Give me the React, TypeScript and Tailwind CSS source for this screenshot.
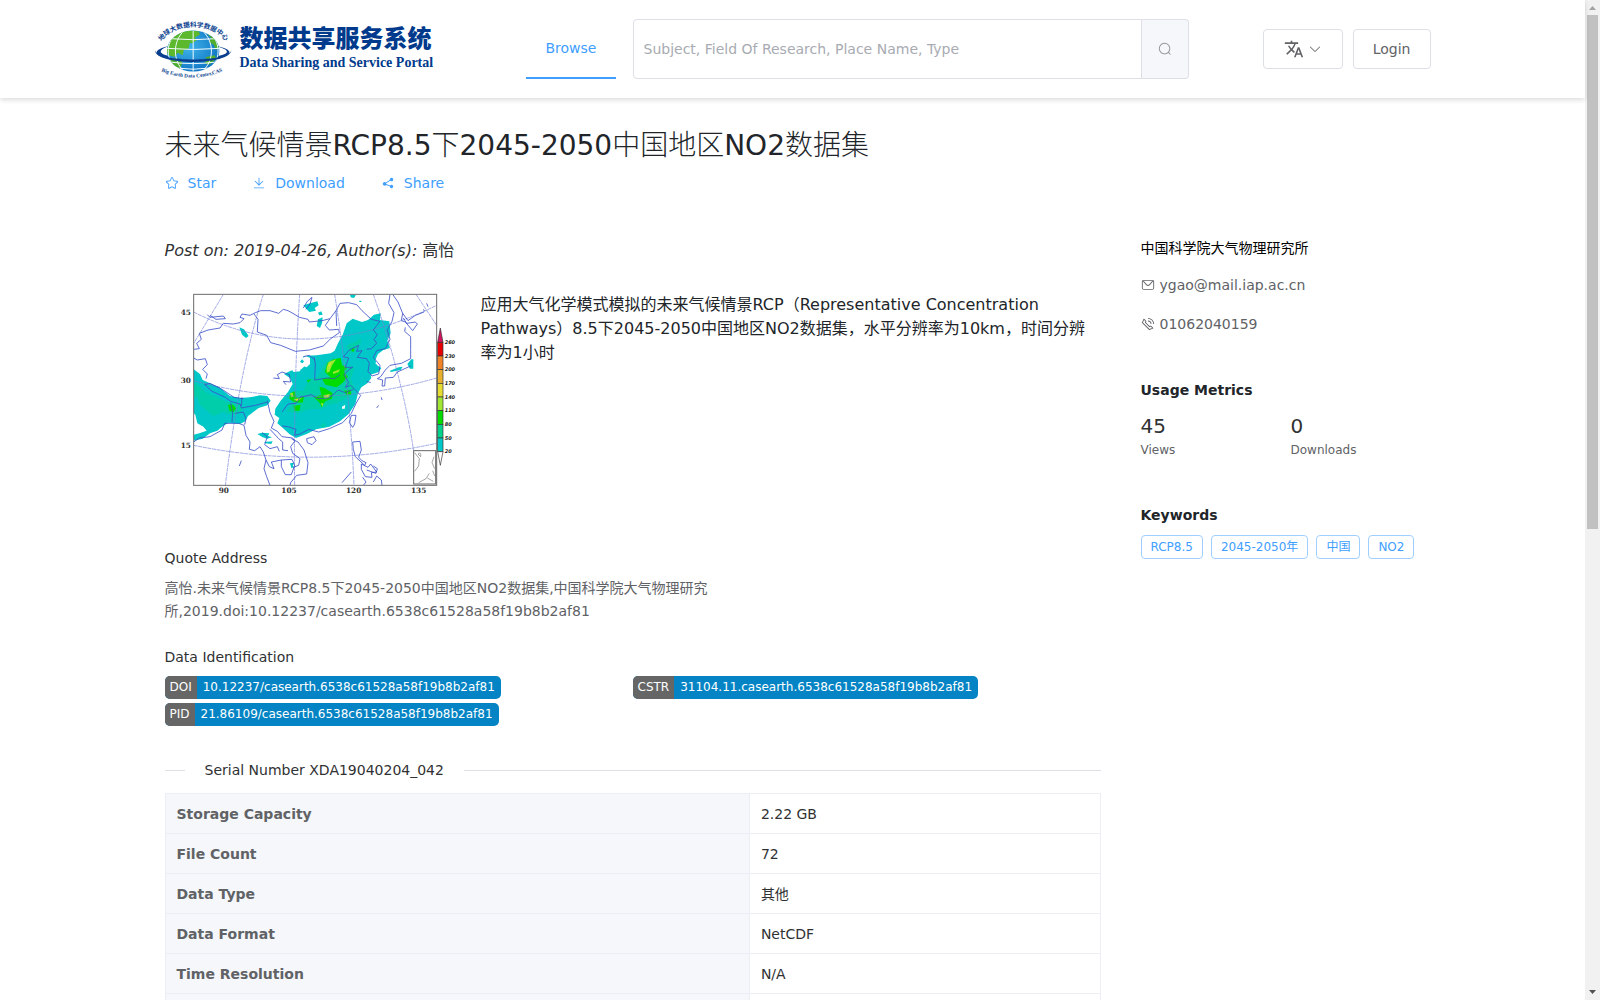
import type { ReactNode } from "react";

const ICONS = {
  search:
    "m795.904 750.72 124.992 124.928a32 32 0 0 1-45.248 45.248L750.656 795.904a416 416 0 1 1 45.248-45.248zM480 832a352 352 0 1 0 0-704 352 352 0 0 0 0 704z",
  arrowDown:
    "M831.872 340.864 512 652.672 192.128 340.864a30.592 30.592 0 0 0-42.752 0 29.12 29.12 0 0 0 0 41.6L489.664 714.24a32 32 0 0 0 44.672 0l340.288-331.712a29.12 29.12 0 0 0 0-41.728 30.592 30.592 0 0 0-42.752 0z",
  star: "m512 747.84 228.16 119.936a6.4 6.4 0 0 0 9.28-6.72l-43.52-254.08 184.512-179.904a6.4 6.4 0 0 0-3.52-10.88l-255.104-37.12L517.76 147.904a6.4 6.4 0 0 0-11.52 0L392.192 379.072l-255.104 37.12a6.4 6.4 0 0 0-3.52 10.88L318.08 606.976l-43.584 254.08a6.4 6.4 0 0 0 9.28 6.72L512 747.84zM313.6 924.48a70.4 70.4 0 0 1-102.144-74.24l37.888-220.928L88.96 472.96A70.4 70.4 0 0 1 128 352.896l221.76-32.256 99.2-200.96a70.4 70.4 0 0 1 126.208 0l99.2 200.96 221.824 32.256a70.4 70.4 0 0 1 39.04 120.064L774.72 629.376l37.888 220.928a70.4 70.4 0 0 1-102.144 74.24L512 820.096l-198.4 104.32z",
  download:
    "M160 832h704a32 32 0 1 1 0 64H160a32 32 0 1 1 0-64zm384-253.696 236.288-236.352 45.248 45.248L508.8 704 192 387.2l45.248-45.248L480 584.704V128h64v450.304z",
  share:
    "m679.872 348.8-301.76 188.608a127.808 127.808 0 0 1 5.12 52.16l279.936 104.96a128 128 0 1 1-22.464 59.904l-279.872-104.96a128 128 0 1 1-16.64-166.272l301.696-188.608a128 128 0 1 1 33.92 54.272z",
  message:
    "M128 224v512a64 64 0 0 0 64 64h640a64 64 0 0 0 64-64V224H128zm0-64h768a64 64 0 0 1 64 64v512a128 128 0 0 1-128 128H192A128 128 0 0 1 64 736V224a64 64 0 0 1 64-64zM904 224 656.512 506.88a192 192 0 0 1-289.024 0L120 224h784zm-698.944 0 210.56 240.704a128 128 0 0 0 192.704 0L818.944 224H205.056z",
  phone:
    "M79.36 432.256 591.744 944.64a32 32 0 0 0 35.2 6.784l253.44-108.544a32 32 0 0 0 9.984-52.032l-153.856-153.92a32 32 0 0 0-36.928-6.016l-69.888 34.944L358.08 394.24l35.008-69.888a32 32 0 0 0-5.952-36.928L233.152 133.568a32 32 0 0 0-52.032 10.048L72.512 397.056a32 32 0 0 0 6.784 35.2zm60.48-29.952 81.536-190.08L325.568 316.48l-24.64 49.216-20.608 41.216 32.576 32.64 271.552 271.552 32.64 32.64 41.216-20.672 49.28-24.576 104.192 104.128-190.08 81.472L139.84 402.304zM512 320v-64a256 256 0 0 1 256 256h-64a192 192 0 0 0-192-192zm0-192V64a448 448 0 0 1 448 448h-64a384 384 0 0 0-384-384z",
};

function Icon({ name }: { name: keyof typeof ICONS }) {
  return (
    <svg viewBox="0 0 1024 1024" className="size-3.5 shrink-0" fill="currentColor" aria-hidden="true">
      <path d={ICONS[name]} />
    </svg>
  );
}

const actions: { label: string; icon: keyof typeof ICONS }[] = [
  { label: "Star", icon: "star" },
  { label: "Download", icon: "download" },
  { label: "Share", icon: "share" },
];

const identifiers = [
  { type: "DOI", value: "10.12237/casearth.6538c61528a58f19b8b2af81" },
  { type: "CSTR", value: "31104.11.casearth.6538c61528a58f19b8b2af81" },
  { type: "PID", value: "21.86109/casearth.6538c61528a58f19b8b2af81" },
];

const details = [
  { name: "Storage Capacity", value: "2.22 GB" },
  { name: "File Count", value: "72" },
  { name: "Data Type", value: "其他" },
  { name: "Data Format", value: "NetCDF" },
  { name: "Time Resolution", value: "N/A" },
  { name: "Spatial Resolution", value: "10km" },
];

const metrics = [
  { value: 45, label: "Views" },
  { value: 0, label: "Downloads" },
];

const keywords = ["RCP8.5", "2045-2050年", "中国", "NO2"];

const legend = [
  { color: "#e60000", label: "260" },
  { color: "#f08228", label: "230" },
  { color: "#e6af2d", label: "200" },
  { color: "#e6dc32", label: "170" },
  { color: "#a0e632", label: "140" },
  { color: "#00dc00", label: "110" },
  { color: "#00d28c", label: "80" },
  { color: "#00c8c8", label: "50" },
];

function Logo() {
  return (
    <a href="#" className="flex items-center gap-2 pl-[2px] text-[#003a8c]">
      <svg viewBox="45 54 232 186" className="h-[62px] w-[77px] shrink-0" aria-hidden="true">
        <defs>
          <radialGradient id="sea" cx="0.4" cy="0.4" r="0.7">
            <stop offset="0" stopColor="#3fb4ea" />
            <stop offset="1" stopColor="#0b6fc0" />
          </radialGradient>
          <clipPath id="globe">
            <ellipse cx="160" cy="153" rx="79" ry="62" />
          </clipPath>
          <path id="arcTop" d="M64 124C104 66 216 66 258 124" />
          <path id="arcBottom" d="M64 214Q160 254 258 210" />
        </defs>
        <path d="M90 137C20 152 40 180 160 180C285 180 295 148 228 138C292 154 262 173 160 173C62 173 36 155 90 137Z" fill="#0a3f8f" />
        <ellipse cx="160" cy="153" rx="79" ry="62" fill="url(#sea)" />
        <g clipPath="url(#globe)">
          <path d="M80 150L92 118L118 97L150 90L178 94L180 104L165 112L172 120L158 130L150 128L146 146L132 150L128 166L114 158L104 170L84 166Z" fill="#5cb82c" />
          <path d="M200 98L226 116L238 142L228 150L222 134L208 126L214 114ZM88 176L110 174L128 188L120 208L100 198ZM196 172L224 166L230 176L210 194L192 190L204 180Z" fill="#4fae2b" />
          <g fill="none" stroke="#f3fbff" strokeWidth="3">
            <path d="M160 90V216M132 92C98 125 98 182 132 214M188 92C224 125 224 182 188 214M108 102C74 130 80 184 110 208M212 102C246 130 240 184 210 208" />
            <path d="M94 116Q160 122 226 116M80 145Q160 152 240 145M88 186Q160 196 232 186M106 204Q160 212 214 204" />
          </g>
        </g>
        <path d="M45 150C50 188 270 188 275 150C276 198 44 198 45 150Z" fill="#0a3f8f" />
        <text className="font-['Noto_Sans_CJK_SC'] text-[20px] font-bold" fill="#0a3f8f">
          <textPath href="#arcTop">地球大数据科学数据中心</textPath>
        </text>
        <text className="font-['Liberation_Serif'] text-[16px] font-bold" fill="#0a3f8f">
          <textPath href="#arcBottom">Big Earth Data Center,CAS</textPath>
        </text>
      </svg>
      <span className="flex flex-col whitespace-nowrap">
        <span className="font-['Noto_Sans_CJK_SC'] text-2xl leading-7 font-black">数据共享服务系统</span>
        <span className="font-['Liberation_Serif'] text-[14px] leading-6 font-bold">Data Sharing and Service Portal</span>
      </span>
    </a>
  );
}

function Header() {
  return (
    <header className="relative bg-white shadow-[0_2px_5px_rgba(0,0,0,0.14)]">
      <div className="mx-auto grid h-[98px] max-w-[1280px] grid-cols-[373fr_107fr_556fr_244fr] items-center">
        <Logo />
        <nav>
          <a
            href="#"
            className="inline-flex h-[60px] items-center border-b-2 border-[#409eff] px-5 text-[#409eff]"
          >
            Browse
          </a>
        </nav>
        <form className="flex h-[60px]">
          <label htmlFor="query" className="sr-only">
            Search
          </label>
          <input
            id="query"
            type="text"
            placeholder="Subject, Field Of Research, Place Name, Type"
            className="min-w-0 flex-1 rounded-l border border-[#dcdfe6] px-2.5 text-base placeholder:text-sm placeholder:text-[#a8abb2]"
          />
          <button
            type="button"
            aria-label="Search"
            className="flex w-[47px] items-center justify-center rounded-r border border-l-0 border-[#dcdfe6] bg-[#f5f7fa] text-[#909399]"
          >
            <Icon name="search" />
          </button>
        </form>
        <div className="flex justify-end gap-2.5 pr-0.5 text-[#606266]">
          <button
            type="button"
            aria-label="Language"
            className="flex h-10 items-center gap-1 rounded border border-[#dcdfe6] px-5"
          >
            <svg viewBox="0 0 24 24" className="size-5" fill="currentColor" aria-hidden="true">
              <path d="M12.87 15.07l-2.54-2.51.03-.03c1.74-1.94 2.98-4.17 3.71-6.53H17V4h-7V2H8v2H1v1.99h11.17C11.5 7.92 10.44 9.75 9 11.35 8.07 10.32 7.3 9.19 6.69 8h-2c.73 1.63 1.73 3.17 2.98 4.56l-5.09 5.02L4 19l5-5 3.11 3.11.76-2.04zM18.5 10h-2L12 22h2l1.12-3h4.75L21 22h2l-4.5-12zm-2.62 7l1.62-4.33L19.12 17h-3.24z" />
            </svg>
            <Icon name="arrowDown" />
          </button>
          <button type="button" className="h-10 rounded border border-[#dcdfe6] px-[19px]">
            Login
          </button>
        </div>
      </div>
    </header>
  );
}

// NO2 concentration over East Asia with its colour scale
function ConcentrationMap() {
  return (
    <svg viewBox="15 12 900 660" className="h-[220px] w-[300px] shrink-0" role="img" aria-label="NO2">
      <defs>
        <clipPath id="frame">
          <rect x="101" y="43" width="729" height="573" />
        </clipPath>
      </defs>
      <rect x="101" y="43" width="729" height="573" fill="#fff" />
      <g clipPath="url(#frame)">
        <g fill="#00c8c8">
          <path d="M101 268L120 282L128 300L150 310L178 322L210 348L240 354L270 352L300 346L322 348L332 362L322 376L296 384L280 396L264 408L256 424L240 432L206 428L186 440L172 452L150 460L128 476L101 482V464L118 460L140 452L130 440L112 430L106 404L101 400Z" />
          <path d="M560 130L578 116L606 126L624 120L642 104L662 100L660 120L688 124L692 160L682 182L690 204L670 210L654 222L646 240L652 256L664 264L656 276L632 284L634 294L622 310L604 322L594 340L586 372L566 402L540 424L508 440L468 448L440 462L408 474L388 462L366 442L352 430L358 414L344 404L346 386L362 362L384 336L398 312L390 294L372 282L392 272L424 268L438 254L420 246L432 228L470 226L512 220L524 212L534 190L548 164Z" />
          <path d="M430 76L450 70L472 64L476 76L464 84L468 92L448 96L440 88ZM474 98L484 94L488 104L478 106ZM474 118L488 112L486 130L480 144L470 138ZM238 142L252 148L266 168L258 174L246 164ZM292 462L306 458L328 460L324 468L336 472L322 476L308 472ZM312 486L338 484L334 492L316 490ZM570 44L588 44L582 54L572 52ZM598 62H604V66H598ZM754 238H760V266H750L742 252ZM690 272L716 262L728 260L722 270L692 276ZM390 550L402 548L398 558L404 562L394 564Z" />
        </g>
        <g fill="#00cdaa">
          <path d="M101 306L118 318L140 338L170 350L200 366L236 372L250 384L240 400L214 406L190 396L160 408L134 386L120 376L112 352L101 348Z" />
          <path d="M446 300L474 290L492 256L506 238L540 234L560 262L584 262L572 296L584 326L566 352L530 370L506 376L484 386L446 388L414 400L392 396L380 394L396 372L388 350L400 334L430 332ZM560 196L584 186L602 174L602 190L584 216L568 218ZM484 432L498 430L496 442L484 442Z" />
        </g>
        <g fill="#00dc00">
          <path d="M494 276L502 250L520 238L542 234L546 256L562 262L552 276L564 290L548 308L530 322L496 314L486 296L512 292ZM390 340L404 334L410 354L432 350L428 368L402 366L388 356ZM478 320L494 324L518 340L516 356L496 364L484 382L480 370L462 352L484 344ZM400 378L422 374L418 392L404 392ZM204 374L220 374L228 386L220 396L208 392ZM552 332L572 330L574 344L560 346ZM576 204L584 206L580 216L574 212ZM440 300L454 298L444 308Z" />
        </g>
        <path d="M500 262L506 246L528 238L516 256L508 276L500 278ZM518 276L540 268L536 276L520 282ZM390 340L398 338L400 350L394 352ZM400 358L426 354L412 364ZM490 346L510 342L508 352L494 356ZM482 370L490 370L488 380Z" fill="#a0e632" />
        <path d="M504 258L512 248L510 260ZM404 358L420 356L410 362ZM496 346L506 344L502 352Z" fill="#e6dc32" />
        <path d="M101 432L114 438L120 446L138 450L101 462ZM424 236L438 228L450 234L450 252L440 262L424 256L432 244ZM398 268L424 260L420 274L400 276ZM546 380L556 374L554 386L546 386ZM664 218L680 210L692 240L660 262L646 250Z" fill="#fff" />

        {/* parallels and meridians */}
        <g fill="none" stroke="#7582d8" strokeWidth="2" strokeDasharray="12 2">
          <path d="M101 96Q440 268 830 76M101 302Q460 400 830 294M101 496Q460 570 830 490" />
          <path d="M190 43Q150 110 101 190M310 43Q240 260 196 616M419 43Q400 330 404 616M524 43Q570 330 582 616M640 43Q730 300 762 520M768 43L830 136" />
        </g>

        {/* coastlines and borders */}
        <g fill="none" stroke="#3c50c8" strokeWidth="2.5" strokeLinejoin="round">
          <path d="M101 234L112 240L136 236L142 254L128 268L142 282L138 296M101 208L118 206L110 190L124 178L118 160L144 150L180 144L190 130L220 132L240 128L252 116L240 112L246 102L270 106L286 98L302 92L330 92L356 100L370 88L384 92L402 102L418 112L444 118L448 126L486 122L510 116L528 92L540 70L566 68L590 74L606 92L634 118L660 124L640 150L652 164L642 178L650 190L634 206L620 208" />
          <path d="M282 102L294 118L292 156L320 166L332 188L362 196L406 214L448 210L490 198L512 176L538 158L536 148L508 150L496 136L510 116M528 92L530 138" />
          <path d="M142 104L150 112L190 108L196 116L168 118L150 106M430 84L442 64L456 52L450 72L438 88" />
          <path d="M134 314L156 334L196 352L212 364L240 372L244 384L286 376L322 366M134 314L150 310L186 328L222 352L250 356M246 352L244 378M212 368L218 398L216 426M226 400L250 396L258 416L254 434" />
          <path d="M101 486L118 474L150 470L186 450L194 430L236 430L252 436L258 466L270 486L268 508L284 512L300 500L310 516L318 540L312 566L320 590L330 616M322 362L330 398L342 424L334 444L352 454L366 470L398 474L404 484M306 458L322 470L314 494L330 506L352 500L358 514M330 448L356 476L368 486L368 510L384 512" />
          <path d="M366 438L384 440L408 448L404 466L420 462L446 448L476 456L508 446L548 428L574 400L588 370L602 346L584 328L572 316L556 322L566 308L552 284L568 268L578 262L556 262L566 234L550 230L568 210L596 196L590 214L606 212L592 232L620 236L628 250L624 274L636 288L656 282L660 256L640 232L650 212L676 206L690 178L682 150L696 124L702 98L686 70L690 43" />
          <path d="M404 484L392 500L398 520L420 536L416 556L400 562M394 476L414 486L432 510L444 548L440 582L410 586L392 608L390 616M364 540L396 538L404 556L394 584L376 584L364 560ZM364 540L334 546L342 566L328 560L318 540" />
          <path d="M440 476L462 470L468 482L456 494L442 488ZM574 406H588L584 432L578 442L568 428ZM578 486L600 484L604 510L596 532L606 542L618 548L614 556L586 530L580 508ZM604 552L624 562L632 552L650 576L634 578L636 592L616 590L604 568ZM640 558L652 566L648 580L620 570M608 592L618 606L610 616M640 606L650 588L664 600L666 616" />
          <path d="M546 608L574 576M238 558L244 542M650 384L656 376M664 352L666 360M800 70L804 80" />
          <path d="M698 43L714 66L728 100L724 122L736 126L758 152L772 132L766 126L740 130L730 114M736 142L734 154L752 170L752 208L752 236L724 250L690 256L676 270L662 290L652 296L668 300L666 318L674 318L676 294L700 292L712 276L752 258M728 100L744 122L766 106L792 96M790 88L794 94M620 304L632 308" />
          <path d="M340 294L358 296L352 284L366 276L388 284L392 306L370 304L378 314M462 232L466 252L464 300L500 294L524 296L540 284M430 230L448 226L466 240" />
          <path d="M366 396L384 372L408 370L420 352L454 344L474 356L506 354L524 340L534 330L556 338L580 328" />
        </g>
      </g>
      <rect x="101" y="43" width="729" height="573" fill="none" stroke="#6b6b6b" strokeWidth="3" />

      <rect x="761" y="512" width="66" height="100" fill="#fff" stroke="#666" strokeWidth="3" />
      <path
        d="M764 518L778 536L776 558L764 574M774 522Q784 514 782 530ZM822 530L816 548L824 566M818 572L824 588M776 608L798 596L808 580M802 594L820 604"
        fill="none"
        stroke="#777"
        strokeWidth="2"
      />

      <g stroke="#333" strokeWidth="2">
        <path d="M841 144L849 187H833Z" fill="#d2145f" />
        {legend.map((step, i) => (
          <rect key={step.label} x="833" y={187 + i * 41} width="16" height="41" fill={step.color} />
        ))}
        <path d="M833 515H849L841 556Z" fill="#fff" />
      </g>
      <g className="font-['DejaVu_Sans'] text-[15px] font-bold italic" fill="#222">
        {legend.map((step, i) => (
          <text key={step.label} x="854" y={192 + i * 41}>
            {step.label}
          </text>
        ))}
        <text x="854" y="520">20</text>
      </g>
      <g className="font-['DejaVu_Serif'] text-[22px] font-bold" fill="#333">
        <text x="62" y="104">45</text>
        <text x="62" y="309">30</text>
        <text x="62" y="505">15</text>
        <text x="176" y="638">90</text>
        <text x="364" y="638">105</text>
        <text x="558" y="638">120</text>
        <text x="753" y="638">135</text>
      </g>
    </svg>
  );
}

function Badge({ type, value }: { type: string; value: string }) {
  return (
    <a href="#" className="inline-flex h-[23px] items-center overflow-hidden rounded-[5px] bg-[#0484c4] text-xs leading-[23px] text-white">
      <span className="bg-[#666] px-[5px]">{type}</span>
      <span className="px-[6px]">{value}</span>
    </a>
  );
}

function DetailTable() {
  return (
    <table className="mt-[13px] w-full table-fixed border-collapse">
      <tbody>
        {details.map((row) => (
          <tr key={row.name} className="h-10">
            <th
              scope="row"
              className="w-[62.5%] border border-[#ebeef5] bg-[#f5f7fa] px-[11px] text-left font-bold text-[#606266]"
            >
              {row.name}
            </th>
            <td className="border border-[#ebeef5] px-[11px] text-[#303133]">{row.value}</td>
          </tr>
        ))}
      </tbody>
    </table>
  );
}

function SideTitle({ children }: { children: ReactNode }) {
  return <h2 className="font-bold text-[#212529]">{children}</h2>;
}

function Sidebar() {
  return (
    <aside className="w-1/4 pl-7">
      <p className="text-black">中国科学院大气物理研究所</p>
      <p className="mt-[17px] flex items-center gap-[5px] text-[#606266]">
        <Icon name="message" />
        ygao@mail.iap.ac.cn
      </p>
      <p className="mt-[19px] flex items-center gap-[5px] text-[#606266]">
        <Icon name="phone" />
        01062040159
      </p>

      <div className="mt-[46px]">
        <SideTitle>Usage Metrics</SideTitle>
        <dl className="mt-3 flex">
          {metrics.map((metric) => (
            <div key={metric.label} className="flex w-[150px] shrink-0 flex-col-reverse">
              <dt className="text-xs leading-5 text-[#606266]">{metric.label}</dt>
              <dd className="text-xl leading-7 text-[#303133]">{metric.value}</dd>
            </div>
          ))}
        </dl>
      </div>

      <div className="mt-[45px]">
        <SideTitle>Keywords</SideTitle>
        <div className="mt-2.5 flex flex-wrap gap-2">
          {keywords.map((word) => (
            <a
              key={word}
              href="#"
              className="flex h-6 items-center rounded border border-[#a0cfff] px-[9px] text-xs text-[#409eff]"
            >
              {word}
            </a>
          ))}
        </div>
      </div>
    </aside>
  );
}

function ScrollBar() {
  return (
    <div className="flex w-[15px] shrink-0 flex-col bg-[#f1f1f1]" aria-hidden="true">
      <svg viewBox="0 0 15 15" className="size-[15px]" fill="#a3a3a3">
        <path d="M4 10h7L7.500 6z" />
      </svg>
      <div className="flex-1">
        <div className="mx-0.5 h-[53%] bg-[#c1c1c1]" />
      </div>
      <svg viewBox="0 0 15 15" className="size-[15px]" fill="#505050">
        <path d="M4 5h7L7.500 9z" />
      </svg>
    </div>
  );
}

export default function App() {
  return (
    <div className="flex h-screen overflow-hidden bg-white font-['DejaVu_Sans','Noto_Sans_CJK_SC',sans-serif] text-sm text-[#303133]">
      <div className="min-w-0 flex-1">
        <Header />
        <main className="mx-auto max-w-[1280px] pt-7">
          <div className="px-3">
            <h1 className="font-['DejaVu_Sans','Noto_Sans_CJK_SC_Light','Noto_Sans_CJK_SC',sans-serif] text-[28px] leading-10 text-[#212529]">
              未来气候情景RCP8.5下2045-2050中国地区NO2数据集
            </h1>
            <div className="mt-[7px] flex gap-9 text-[#409eff]">
              {actions.map((action) => (
                <button key={action.label} type="button" className="flex items-center gap-[9px]">
                  <Icon name={action.icon} />
                  {action.label}
                </button>
              ))}
            </div>
          </div>

          <div className="mt-[45px] flex">
            <div className="w-3/4 px-3">
              <p className="pt-px text-base">
                <i>Post on: 2019-04-26, Author(s): </i>高怡
              </p>
              <div className="mt-[21px] flex gap-4">
                <ConcentrationMap />
                <p className="mt-[9px] text-base text-[#212529]">
                  应用大气化学模式模拟的未来气候情景RCP（Representative Concentration
                  Pathways）8.5下2045-2050中国地区NO2数据集，水平分辨率为10km，时间分辨率为1小时
                </p>
              </div>

              <h2 className="mt-11">Quote Address</h2>
              <p className="mt-[9px] w-[60%] leading-[23px] text-[#606266]">
                高怡.未来气候情景RCP8.5下2045-2050中国地区NO2数据集,中国科学院大气物理研究所,2019.doi:10.12237/casearth.6538c61528a58f19b8b2af81
              </p>

              <h2 className="mt-6">Data Identification</h2>
              <div className="mt-[9px] grid grid-cols-2 justify-items-start gap-y-1">
                {identifiers.map((id) => (
                  <Badge key={id.type} {...id} />
                ))}
              </div>

              <div className="mt-[34px] flex items-center gap-5">
                <span className="h-px w-5 bg-[#dcdfe6]" />
                <span>Serial Number XDA19040204_042</span>
                <span className="h-px flex-1 bg-[#dcdfe6]" />
              </div>
              <DetailTable />
            </div>
            <Sidebar />
          </div>
        </main>
      </div>
      <ScrollBar />
    </div>
  );
}
